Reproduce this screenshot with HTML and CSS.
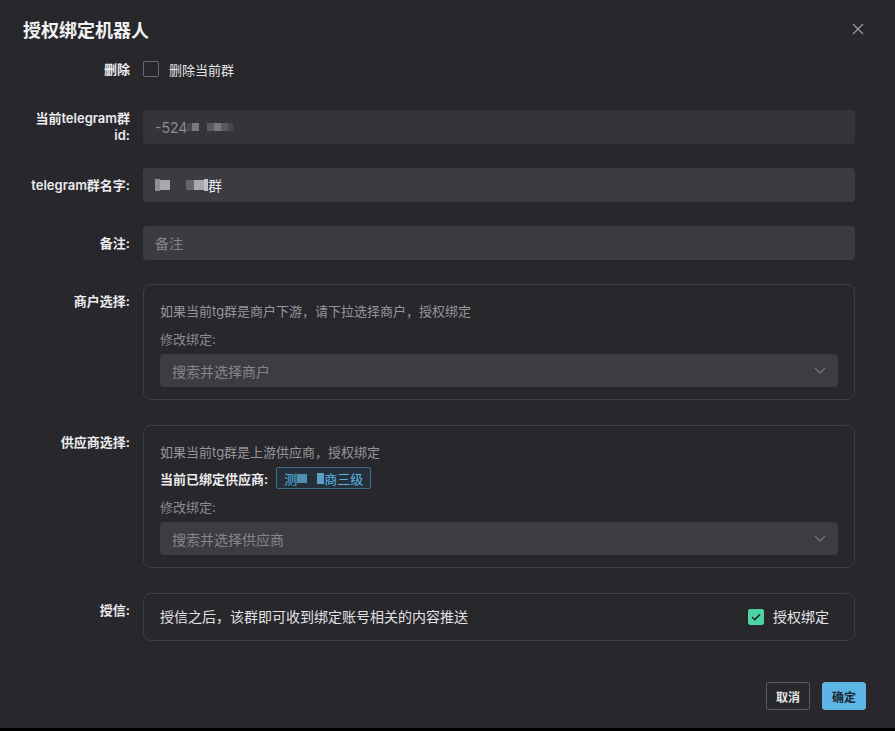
FILE: index.html
```html
<!DOCTYPE html>
<html lang="zh-CN">
  <head>
    <meta charset="UTF-8" />
    <meta name="viewport" content="width=device-width, initial-scale=1.0" />
    <title>授权绑定机器人</title>
    <link rel="stylesheet" href="styles.css">
  </head>
  <body>
    <div class="dialog">
      <header class="dialog-header">
        <h1>授权绑定机器人</h1>
        <button class="close-btn" aria-label="关闭">
          <svg width="12" height="12" viewBox="0 0 12 12">
            <path d="M1 1 L11 11 M11 1 L1 11" stroke="#9a9a9e" stroke-width="1.3" fill="none" />
          </svg>
        </button>
      </header>

      <main class="dialog-body">
        <!-- 删除 -->
        <div class="form-item">
          <label class="item-label">删除</label>
          <div class="item-control check-line">
            <span class="checkbox"></span>
            <span>删除当前群</span>
          </div>
        </div>

        <div class="form-item">
          <label class="item-label">当前telegram群 id:</label>
          <div class="item-control">
            <div class="input disabled">
              -524<span class="mosaic m1"></span><span class="mosaic m2"></span><span class="mosaic m3 gap"></span><span class="mosaic m2"></span><span class="mosaic m3"></span><span class="mosaic m1"></span>
            </div>
          </div>
        </div>

        <div class="form-item">
          <label class="item-label">telegram群名字:</label>
          <div class="item-control">
            <div class="input value">
              <span class="mosaic n1"></span><span class="mosaic n2"></span><span class="mosaic n3 gap"></span><span class="mosaic n2"></span><span class="mosaic n1 thin"></span>群
            </div>
          </div>
        </div>

        <div class="form-item">
          <label class="item-label">备注:</label>
          <div class="item-control">
            <div class="input placeholder">备注</div>
          </div>
        </div>

        <!-- 商户 -->
        <div class="form-item">
          <label class="item-label">商户选择:</label>
          <div class="item-control">
            <div class="panel">
              <p class="hint">如果当前tg群是商户下游，请下拉选择商户，授权绑定</p>
              <p class="field-label">修改绑定:</p>
              <div class="select">
                <span>搜索并选择商户</span>
                <svg width="12" height="7" viewBox="0 0 12 7"><path d="M1 1 L6 6 L11 1" stroke="#77767c" stroke-width="1.3" fill="none" /></svg>
              </div>
            </div>
          </div>
        </div>

        <!-- 供应商 -->
        <div class="form-item">
          <label class="item-label">供应商选择:</label>
          <div class="item-control">
            <div class="panel">
              <p class="hint">如果当前tg群是上游供应商，授权绑定</p>
              <div class="current">
                <span>当前已绑定供应商:</span>
                <span class="tag">测<span class="mosaic t1"></span><span class="mosaic t2 gap"></span>商三级</span>
              </div>
              <p class="field-label">修改绑定:</p>
              <div class="select">
                <span>搜索并选择供应商</span>
                <svg width="12" height="7" viewBox="0 0 12 7"><path d="M1 1 L6 6 L11 1" stroke="#77767c" stroke-width="1.3" fill="none" /></svg>
              </div>
            </div>
          </div>
        </div>

        <!-- 授信 -->
        <div class="form-item">
          <label class="item-label">授信:</label>
          <div class="item-control">
            <div class="panel credit">
              <span>授信之后，该群即可收到绑定账号相关的内容推送</span>
              <span class="check-line">
                <span class="checkbox checked">
                  <svg width="10" height="8" viewBox="0 0 10 8"><path d="M1 4 L3.8 6.6 L9 1.4" stroke="#1d2a25" stroke-width="1.6" fill="none" /></svg>
                </span>
                <span>授权绑定</span>
              </span>
            </div>
          </div>
        </div>
      </main>

      <footer class="dialog-footer">
        <button class="btn">取消</button>
        <button class="btn primary">确定</button>
      </footer>
    </div>
  </body>
</html>
```

FILE: styles.css
```css
body {
  margin: 0;
  padding: 0;
  background-color: #000;
  font-family: Inter, "Noto Sans CJK SC", sans-serif;
  color: #e6e6e8;
}
.dialog {
  background-color: #28272c;
  height: 728px;
  box-sizing: border-box;
}
.dialog-header {
  display: flex;
  align-items: center;
  justify-content: space-between;
  height: 52px;
  padding: 6px 30px 0 23px;
  box-sizing: border-box;
}
.dialog-header h1 {
  margin: 0;
  font-size: 18px;
  font-weight: 700;
  color: #f2f2f3;
}
.close-btn {
  background: none;
  border: none;
  padding: 0;
  width: 14px;
  height: 14px;
  display: flex;
  align-items: center;
  justify-content: center;
}
.dialog-body {
  padding: 0 40px 0 20px;
}
.form-item {
  display: grid;
  grid-template-columns: 110px 1fr;
  column-gap: 13px;
  margin-bottom: 24px;
}
.form-item:nth-child(n + 5) {
  margin-bottom: 25px;
}
.form-item:last-child {
  margin-bottom: 0;
}
.item-label {
  min-height: 34px;
  display: flex;
  align-items: center;
  justify-content: flex-end;
  align-self: start;
  text-align: right;
  font-size: 13px;
  line-height: 17px;
  font-weight: 600;
  color: #ececee;
}
.item-control {
  min-height: 34px;
}
.check-line {
  display: flex;
  align-items: center;
  gap: 10px;
  font-size: 13px;
  color: #e6e6e8;
}
.checkbox {
  width: 14px;
  height: 14px;
  border: 1px solid #6a696f;
  border-radius: 2px;
  display: inline-flex;
  align-items: center;
  justify-content: center;
}
.checkbox.checked {
  background-color: #4dd4a3;
  border-color: #4dd4a3;
}
.input {
  height: 34px;
  box-sizing: border-box;
  border-radius: 4px;
  background-color: #3c3b41;
  padding: 0 12px;
  display: flex;
  align-items: center;
  font-size: 14px;
}
.input.disabled {
  background-color: #35343a;
  color: #8c8b90;
}
.input.value {
  color: #ececee;
}
.input.placeholder {
  color: #86858a;
}
.mosaic {
  display: inline-block;
  height: 8px;
  background-color: #6e6d73;
}
.mosaic.gap {
  margin-left: 8px;
}
.m1 { width: 5px; background-color: #48474d; }
.m2 { width: 7px; background-color: #78777d; }
.m3 { width: 7px; background-color: #5b5a60; }
.n1 { width: 5px; height: 12px; background-color: #8f8e94; }
.n2 { width: 10px; height: 10px; background-color: #a9a8ae; }
.n3 { width: 8px; height: 10px; background-color: #66656b; }
.n3.gap { margin-left: 16px; }
.n1.thin { width: 4px; background-color: #c3c2c8; }
.t1 { width: 10px; height: 9px; background-color: #4f8fb5; }
.t2 { width: 7px; height: 11px; background-color: #5d9fc6; }
.t2.gap { margin-left: 10px; }
.panel {
  border: 1px solid #3f3e44;
  border-radius: 8px;
  padding: 16px 16px 12px;
}
.hint {
  margin: 0;
  font-size: 13px;
  line-height: 20px;
  color: #96959a;
}
.field-label {
  margin: 8px 0 5px;
  font-size: 13px;
  line-height: 20px;
  color: #8c8b90;
}
.current {
  display: flex;
  align-items: center;
  margin-top: 5px;
  font-size: 13px;
  font-weight: 600;
  color: #ececee;
  gap: 8px;
}
.tag {
  display: inline-flex;
  align-items: center;
  height: 22px;
  box-sizing: border-box;
  padding: 0 7px;
  border: 1px solid #3a6c8c;
  border-radius: 2px;
  color: #5ab5e6;
  font-size: 13px;
  font-weight: 400;
  background-color: #25303a;
}
.select {
  height: 33px;
  box-sizing: border-box;
  border-radius: 4px;
  background-color: #3d3c42;
  padding: 0 12px;
  display: flex;
  align-items: center;
  justify-content: space-between;
  font-size: 14px;
  color: #86858a;
}
.panel.credit {
  display: flex;
  align-items: center;
  justify-content: space-between;
  padding: 13px 25px 13px 16px;
  font-size: 14px;
  line-height: 20px;
  color: #e2e2e4;
}
.panel.credit .check-line {
  font-size: 14px;
  gap: 9px;
}
.dialog-footer {
  display: flex;
  justify-content: flex-end;
  gap: 12px;
  padding: 41px 29px 0 0;
}
.btn {
  height: 28px;
  width: 44px;
  padding: 0;
  border: 1px solid #5c5b61;
  border-radius: 3px;
  background: transparent;
  color: #e6e6e8;
  font-family: inherit;
  font-size: 12px;
  font-weight: 600;
}
.btn.primary {
  background-color: #5cb5e5;
  border-color: #5cb5e5;
  color: #1c2630;
}
```
